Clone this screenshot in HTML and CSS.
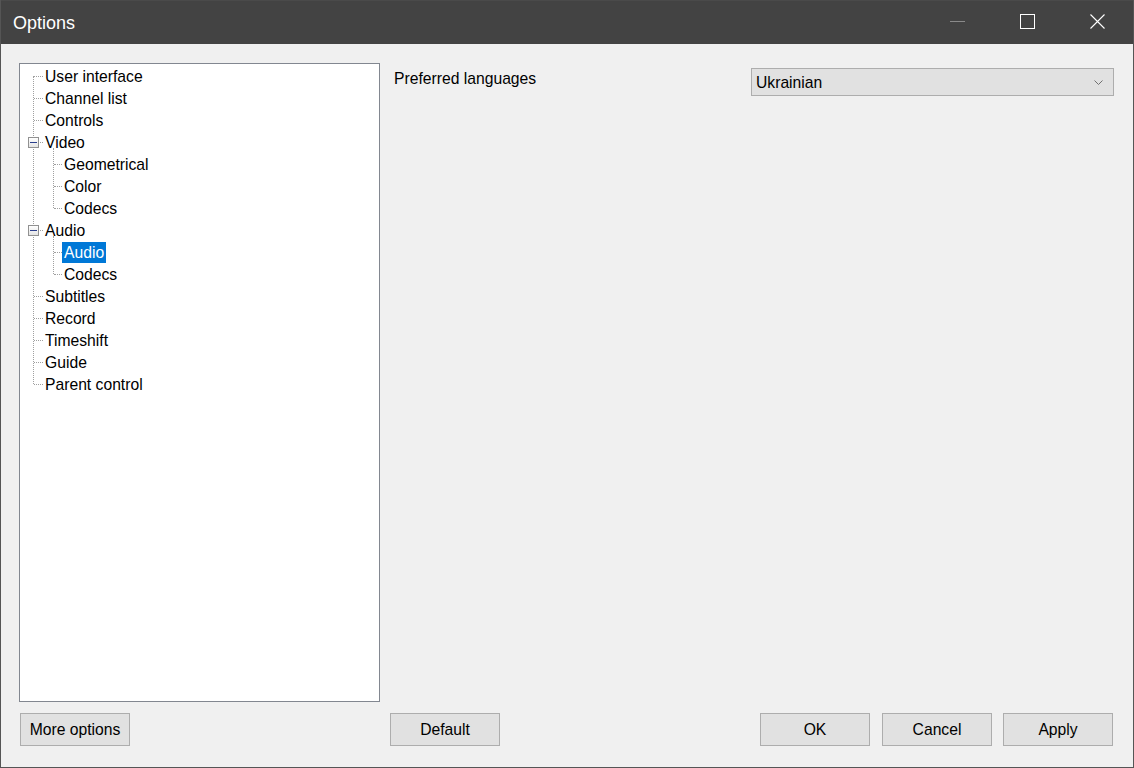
FILE: index.html
```html
<!DOCTYPE html>
<html lang="en">
<head>
    <meta charset="UTF-8">
    <title>Options</title>
    <link rel="stylesheet" href="styles.css">
</head>
<body>
    <div class="window">
        <div class="titlebar">
            <div class="title">Options</div>
            <div class="caption-buttons">
                <div class="caption-btn">
                    <svg width="16" height="16" viewBox="0 0 16 16"><line x1="0" y1="7.5" x2="15" y2="7.5" stroke="#8a8a8a" stroke-width="1"/></svg>
                </div>
                <div class="caption-btn">
                    <svg width="16" height="16" viewBox="0 0 16 16"><rect x="0.5" y="0.5" width="14" height="14" fill="none" stroke="#fff" stroke-width="1"/></svg>
                </div>
                <div class="caption-btn">
                    <svg width="16" height="16" viewBox="0 0 16 16"><path d="M0.5 0.5 L14.5 14.5 M14.5 0.5 L0.5 14.5" stroke="#fff" stroke-width="1.1"/></svg>
                </div>
            </div>
        </div>

        <div class="content">
            <div class="tree">
                <div class="tree-list">
                    <div class="node"><span class="label">User interface</span></div>
                    <div class="node"><span class="label">Channel list</span></div>
                    <div class="node"><span class="label">Controls</span></div>
                    <div class="node"><span class="toggle"></span><span class="label">Video</span></div>
                    <div class="children">
                        <div class="node child"><span class="label">Geometrical</span></div>
                        <div class="node child"><span class="label">Color</span></div>
                        <div class="node child"><span class="label">Codecs</span></div>
                    </div>
                    <div class="node"><span class="toggle"></span><span class="label">Audio</span></div>
                    <div class="children">
                        <div class="node child selected"><span class="label">Audio</span></div>
                        <div class="node child"><span class="label">Codecs</span></div>
                    </div>
                    <div class="node"><span class="label">Subtitles</span></div>
                    <div class="node"><span class="label">Record</span></div>
                    <div class="node"><span class="label">Timeshift</span></div>
                    <div class="node"><span class="label">Guide</span></div>
                    <div class="node"><span class="label">Parent control</span></div>
                </div>
            </div>

            <div class="pane">
                <div class="field-label">Preferred languages</div>
                <div class="combo">
                    <span>Ukrainian</span>
                    <svg width="10" height="6" viewBox="0 0 10 6"><polyline points="0.5,0.5 4.5,4.5 8.5,0.5" fill="none" stroke="#707070" stroke-width="1"/></svg>
                </div>
            </div>

            <div class="left-buttons">
                <button class="btn">More options</button>
            </div>

            <div class="right-buttons">
                <button class="btn">Default</button>
                <button class="btn push">OK</button>
                <button class="btn">Cancel</button>
                <button class="btn last">Apply</button>
            </div>
        </div>
    </div>
</body>
</html>
```

FILE: styles.css
```css
body {
    margin: 0;
    font-family: "Liberation Sans", Arial, sans-serif;
    font-size: 15.7px;
    color: #000;
    background: #f0f0f0;
}

.window {
    width: 1134px;
    height: 768px;
    box-sizing: border-box;
    border: 1px solid #555555;
    border-top: none;
    background: #f0f0f0;
    display: flex;
    flex-direction: column;
}

.titlebar {
    height: 44px;
    flex-shrink: 0;
    background: #434343;
    border-top: 1px solid #4a4a4a;
    box-sizing: border-box;
    display: flex;
    align-items: center;
    justify-content: space-between;
}

.title {
    color: #fff;
    font-size: 18px;
    padding-left: 12px;
    padding-top: 1px;
}

.caption-buttons {
    display: flex;
    height: 100%;
}

.caption-btn {
    width: 70px;
    display: flex;
    align-items: center;
    justify-content: center;
    padding-bottom: 1px;
}

.content {
    flex: 1;
    display: grid;
    grid-template-columns: 361px 1fr;
    grid-template-rows: 639px 33px;
    column-gap: 10px;
    row-gap: 11px;
    padding: 19px 19px 0 18px;
}

/* tree view */

.tree {
    background: #fff;
    border: 1px solid #828790;
    box-sizing: border-box;
    padding-top: 1px;
}

.tree-list {
    position: relative;
}

.tree-list::before {
    content: "";
    position: absolute;
    left: 13px;
    top: 11px;
    bottom: 11px;
    border-left: 1px dotted #a0a0a0;
}

.node {
    position: relative;
    height: 22px;
    padding-left: 23px;
}

.node::before {
    content: "";
    position: absolute;
    left: 14px;
    top: 11px;
    width: 9px;
    border-top: 1px dotted #a0a0a0;
}

.label {
    display: inline-block;
    line-height: 20px;
    margin-top: 1px;
    padding: 1px 2px 0;
    height: 20px;
    box-sizing: border-box;
    white-space: nowrap;
}

.children {
    position: relative;
}

.children::before {
    content: "";
    position: absolute;
    left: 33px;
    top: -5px;
    bottom: 11px;
    border-left: 1px dotted #a0a0a0;
}

.node.child {
    padding-left: 42px;
}

.node.child::before {
    left: 34px;
    width: 8px;
}

.node.selected .label {
    background: #0078d7;
    color: #fff;
    height: 21px;
}

.toggle {
    position: absolute;
    left: 8px;
    top: 6px;
    width: 11px;
    height: 11px;
    box-sizing: border-box;
    border: 1px solid #919191;
    background: linear-gradient(#ffffff, #e4e4e4);
    z-index: 1;
}

.toggle::after {
    content: "";
    position: absolute;
    left: 1px;
    top: 4px;
    width: 7px;
    height: 1px;
    background: #2b3f8c;
}

/* right pane */

.pane {
    display: flex;
    justify-content: space-between;
    align-items: flex-start;
    padding-top: 5px;
    padding-left: 4px;
}

.field-label {
    line-height: 20px;
    padding-top: 1px;
}

.combo {
    width: 363px;
    height: 28px;
    box-sizing: border-box;
    border: 1px solid #adadad;
    background: #e1e1e1;
    display: flex;
    align-items: center;
    justify-content: space-between;
    padding: 2px 9px 0 4px;
}

/* buttons */

.left-buttons,
.right-buttons {
    display: flex;
}

.btn {
    width: 110px;
    height: 33px;
    border: 1px solid #adadad;
    background: #e1e1e1;
    font-family: inherit;
    font-size: 15.7px;
    color: #000;
    padding: 0;
    margin: 0 0 0 1px;
}

.left-buttons .btn {
    margin-left: 1px;
}

.right-buttons .btn {
    margin-left: 12px;
}

.right-buttons .btn:first-child {
    margin-left: 0;
}

.right-buttons .btn.push {
    margin-left: auto;
}

.right-buttons .btn.last {
    margin-left: 11px;
    margin-right: 1px;
}
```
